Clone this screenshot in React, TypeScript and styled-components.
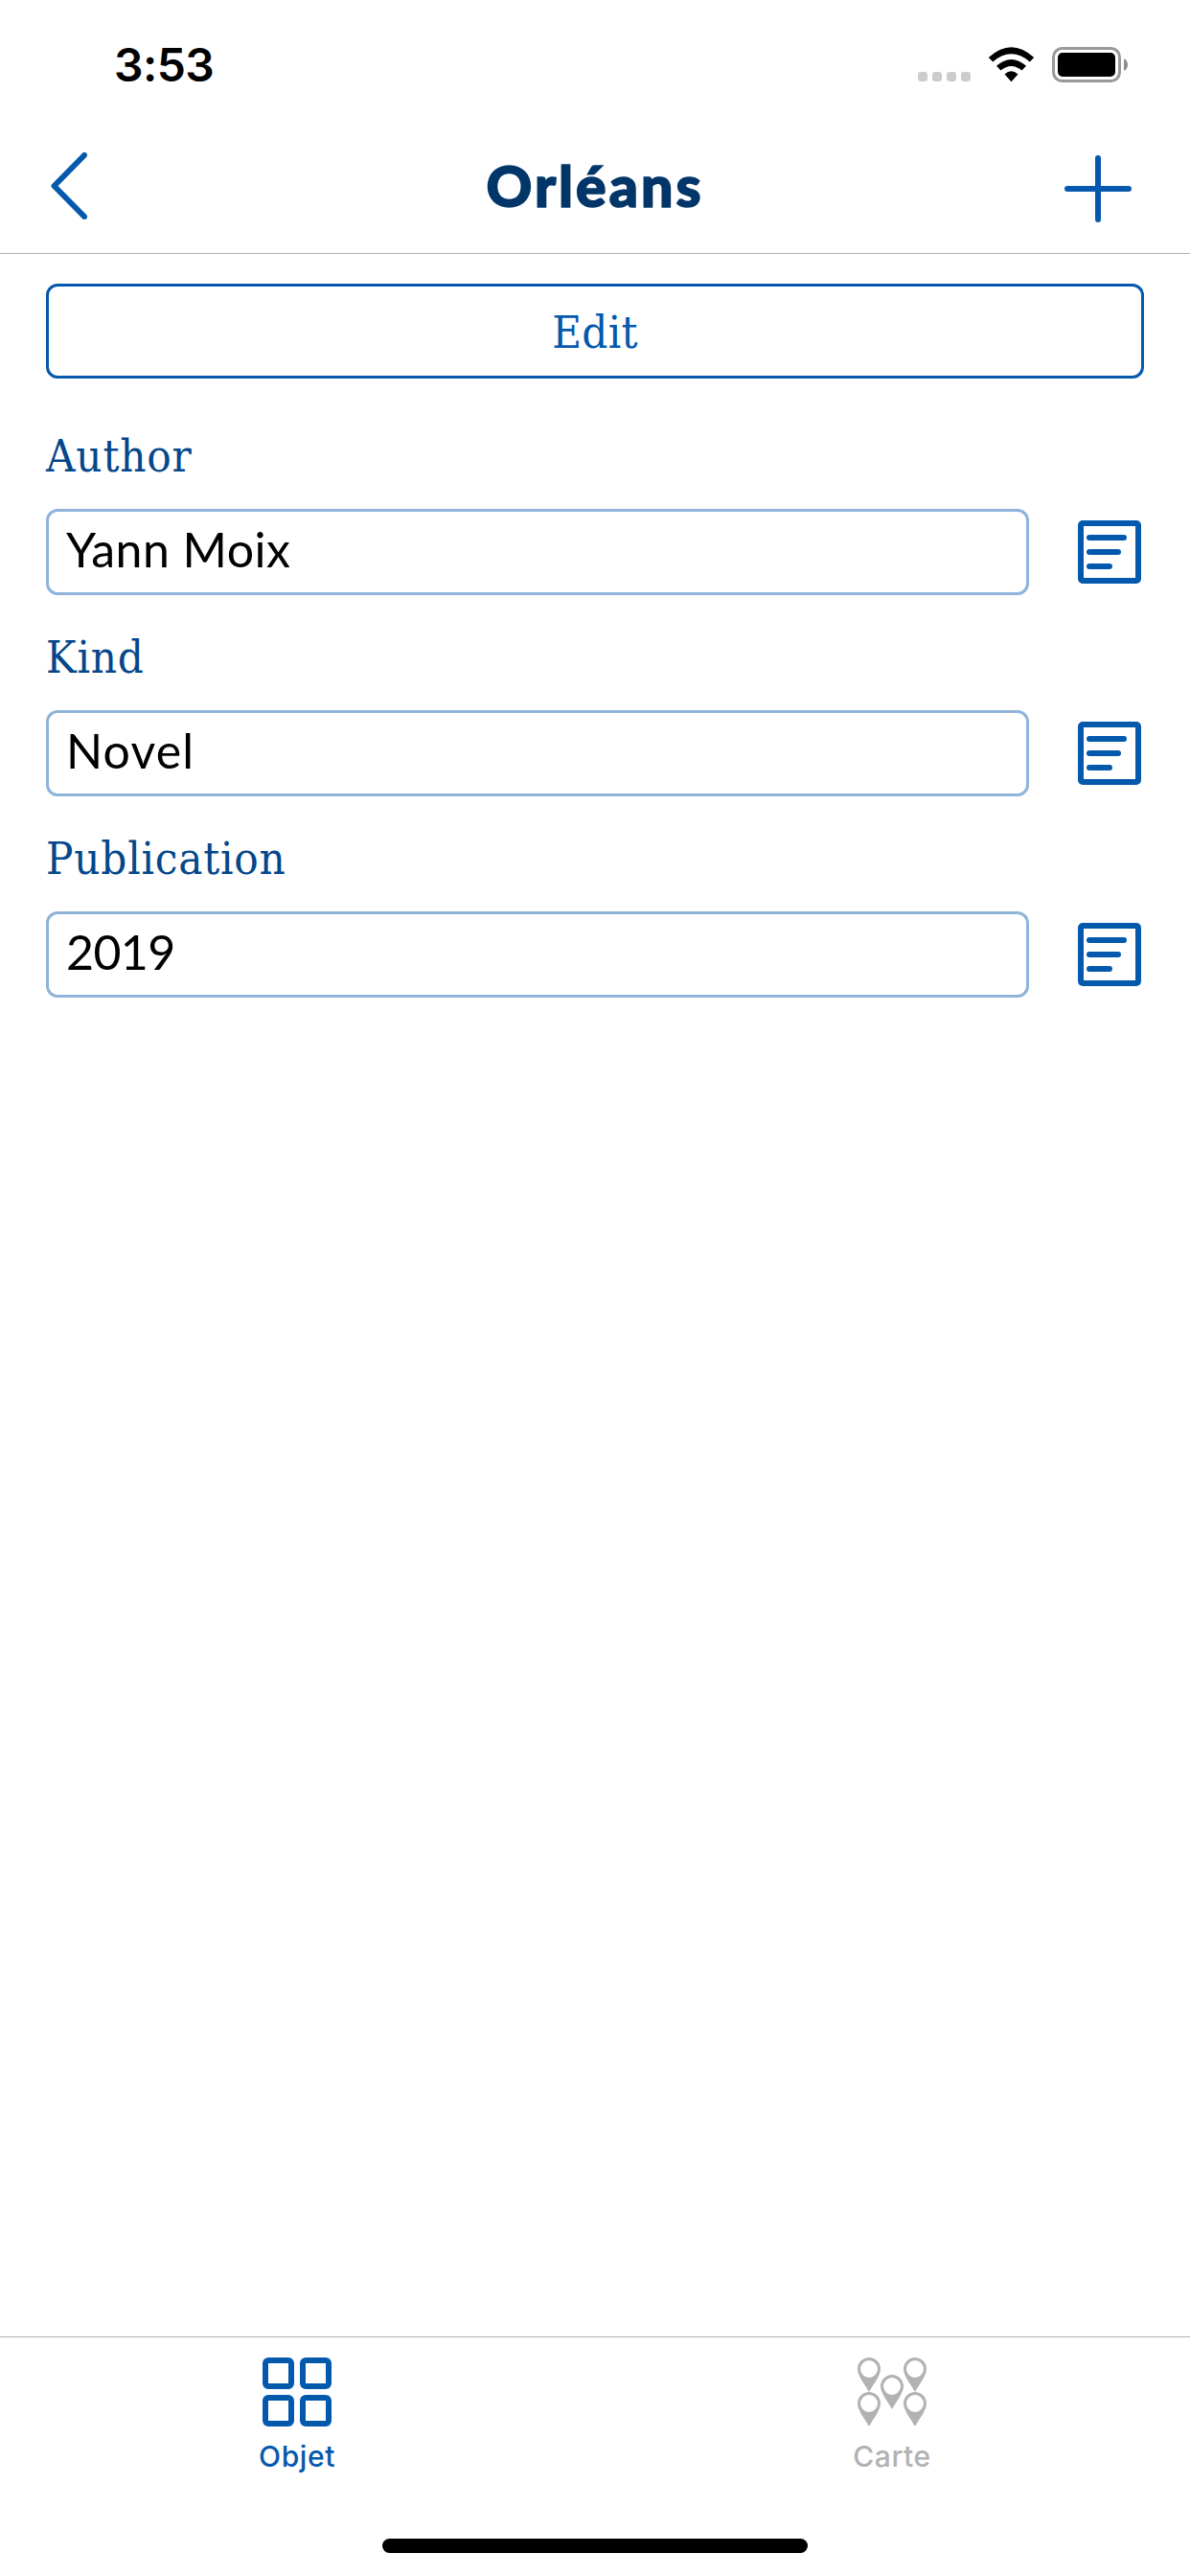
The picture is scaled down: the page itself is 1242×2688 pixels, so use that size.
import React from "react";
import styled, { createGlobalStyle } from "styled-components";

const blue = "#0559ad";
const grey = "#b2b2b2";

const GlobalStyle = createGlobalStyle`
  *, *::before, *::after { box-sizing: border-box; }
  body { margin: 0; background: #fff; }
  button, input { font: inherit; margin: 0; }
  svg { flex: none; }
`;

const Screen = styled.div`
  display: flex;
  flex-direction: column;
  width: 1242px;
  height: 2688px;
  background: #fff;
  overflow: hidden;
`;

const StatusBar = styled.div`
  flex: none;
  display: flex;
  justify-content: space-between;
  height: 132px;
  padding: 0 65px 0 119px;
`;

const Time = styled.span`
  padding-top: 38px;
  font: 600 48px/60px Inter, "Liberation Sans", sans-serif;
  letter-spacing: -0.6px;
  color: #000;
`;

const StatusIcons = styled.div`
  display: flex;
  align-items: flex-start;
  padding-top: 49px;
`;

const NavBar = styled.header`
  flex: none;
  display: grid;
  grid-template-columns: 160px 1fr 160px;
  height: 133px;
  border-bottom: 1px solid ${grey};
`;

const NavButton = styled.button<{ $side: "left" | "right" }>`
  display: flex;
  align-items: flex-start;
  justify-content: ${(p) => (p.$side === "left" ? "flex-start" : "flex-end")};
  padding: ${(p) => (p.$side === "left" ? "27px 0 0 53px" : "30px 61px 0 0")};
  border: 0;
  background: none;
`;

const Title = styled.h1`
  margin: 0;
  padding-top: 27px;
  text-align: center;
  font: 900 59px/70px Lato, "Open Sans", sans-serif;
  letter-spacing: 3px;
  -webkit-text-stroke: 1.6px #033668;
  color: #033668;
`;

const Content = styled.main`
  flex: 1;
  display: flex;
  flex-direction: column;
  padding: 31px 48px 0;
`;

const EditButton = styled.button`
  flex: none;
  height: 99px;
  padding: 2px 0 0;
  border: 3px solid ${blue};
  border-radius: 12px;
  background: none;
  font: 400 47px/60px "DejaVu Serif Condensed", "DejaVu Serif", serif;
  font-stretch: condensed;
  letter-spacing: 0.3px;
  color: ${blue};
`;

const Fields = styled.div`
  display: flex;
  flex-direction: column;
  gap: 30px;
  padding-top: 46px;
`;

const Field = styled.label`
  display: flex;
  flex-direction: column;
  height: 180px;
`;

const FieldName = styled.span`
  height: 90px;
  padding-top: 5px;
  font: 400 47px/60px "DejaVu Serif Condensed", "DejaVu Serif", serif;
  font-stretch: condensed;
  letter-spacing: 0.8px;
  color: #04478a;
`;

const FieldRow = styled.div`
  display: flex;
  align-items: center;
  justify-content: space-between;
  height: 90px;
  padding-right: 3px;
`;

const Input = styled.input<{ $tracking: number }>`
  width: 1026px;
  height: 90px;
  padding: 0 18px 6px;
  border: 3px solid #8fb4da;
  border-radius: 12px;
  background: none;
  outline: none;
  font: 400 50px/60px Lato, "Open Sans", sans-serif;
  letter-spacing: ${(p) => p.$tracking}px;
  color: #000;
`;

const TabBar = styled.nav`
  flex: none;
  display: grid;
  grid-template-columns: 1fr 1fr;
  height: 211px;
  border-top: 1px solid ${grey};
`;

const Tab = styled.div<{ $active?: boolean }>`
  display: flex;
  flex-direction: column;
  align-items: center;
  padding: 21px 1px 0 0;
  gap: 11px;
  color: ${(p) => (p.$active ? blue : grey)};
`;

const TabLabel = styled.span`
  font: 500 30px/40px Inter, "Liberation Sans", sans-serif;
  letter-spacing: 0.6px;
`;

const HomeArea = styled.div`
  flex: none;
  display: flex;
  justify-content: center;
  height: 39px;
`;

const HomeIndicator = styled.div`
  width: 444px;
  height: 15px;
  border-radius: 8px;
  background: #000;
`;

const StatusGlyphs = () => (
  <svg width="220" height="38" viewBox="957 49 220 38">
    {[958, 973, 988, 1003].map((x) => (
      <rect key={x} x={x} y="75" width="10" height="10" rx="3" fill="#ccc" />
    ))}
    <path d="M1031.8 60 Q1055.500 38.500 1079.200 60 L1074.800 64.400 Q1055.500 48 1036.200 64.400Z" />
    <path d="M1040 68.800 Q1055.500 55 1071 68.800 L1066.500 73.500 Q1055.500 64.500 1044.500 73.500Z" />
    <path d="M1048.500 77.500 Q1055.500 71 1062.500 77.500 L1055.500 85.200Z" />
    <rect x="1099.500" y="50.500" width="69" height="34" rx="9" fill="none" stroke="#999" strokeWidth="3" />
    <rect x="1104" y="55" width="60" height="25" rx="5" />
    <path d="M1173 61 Q1177 63.500 1177 67.500 Q1177 71.500 1173 74Z" fill="#8c8c8c" />
  </svg>
);

const NoteIcon = () => (
  <svg width="66" height="66" viewBox="0 0 66 66" fill="none" stroke={blue} strokeWidth="6" strokeLinecap="round">
    <rect x="3" y="3" width="60" height="60" rx="2" />
    <path d="M12 18H48M12 33H42M12 48H33" />
  </svg>
);

const GridIcon = () => (
  <svg width="72" height="72" viewBox="0 0 72 72" fill="none" stroke="currentColor" strokeWidth="6">
    {[3, 42].map((y) =>
      [3, 42].map((x) => <rect key={`${x}-${y}`} x={x} y={y} width="27" height="27" rx="3" />)
    )}
  </svg>
);

const pins = [[0, 0], [48, 0], [24, 18], [0, 36], [48, 36]];

const PinsIcon = () => (
  <svg width="72" height="72" viewBox="0 0 72 72" fill="currentColor">
    {pins.map(([x, y]) => (
      <path
        key={`${x}-${y}`}
        fillRule="evenodd"
        transform={`translate(${x} ${y})`}
        d="M12 0A12 12 0 0 1 24 12C24 19 16.500 28 12 36C7.500 28 0 19 0 12A12 12 0 0 1 12 0ZM12 3A9 9 0 1 0 12 21A9 9 0 1 0 12 3Z"
      />
    ))}
  </svg>
);

const fields = [
  { name: "Author", value: "Yann Moix", tracking: 0.5 },
  { name: "Kind", value: "Novel", tracking: 1.2 },
  { name: "Publication", value: "2019", tracking: -0.6 },
];

export default function App() {
  return (
    <Screen>
      <GlobalStyle />
      <StatusBar>
        <Time>3:53</Time>
        <StatusIcons>
          <StatusGlyphs />
        </StatusIcons>
      </StatusBar>
      <NavBar>
        <NavButton $side="left" aria-label="Back">
          <svg width="38" height="70" viewBox="0 0 38 70" fill="none" stroke={blue} strokeWidth="6" strokeLinecap="round" strokeLinejoin="round">
            <path d="M35 3L3.500 35L35 67" />
          </svg>
        </NavButton>
        <Title>Orléans</Title>
        <NavButton $side="right" aria-label="Add">
          <svg width="70" height="70" viewBox="0 0 70 70" fill="none" stroke={blue} strokeWidth="6" strokeLinecap="round">
            <path d="M35 3V67M3 35H67" />
          </svg>
        </NavButton>
      </NavBar>
      <Content>
        <EditButton>Edit</EditButton>
        <Fields>
          {fields.map((f) => (
            <Field key={f.name}>
              <FieldName>{f.name}</FieldName>
              <FieldRow>
                <Input defaultValue={f.value} $tracking={f.tracking} />
                <NoteIcon />
              </FieldRow>
            </Field>
          ))}
        </Fields>
      </Content>
      <TabBar>
        <Tab $active>
          <GridIcon />
          <TabLabel>Objet</TabLabel>
        </Tab>
        <Tab>
          <PinsIcon />
          <TabLabel>Carte</TabLabel>
        </Tab>
      </TabBar>
      <HomeArea>
        <HomeIndicator />
      </HomeArea>
    </Screen>
  );
}
